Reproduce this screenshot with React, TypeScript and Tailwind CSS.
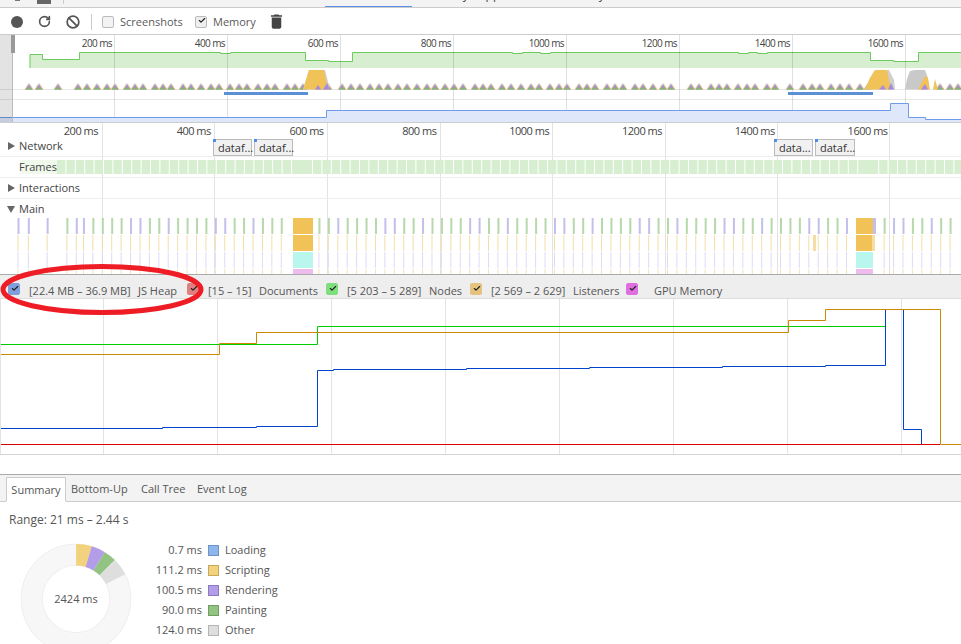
import React from 'react';
import { Check, RotateCw, Ban } from 'lucide-react';

const flameGrid = [102.5, 214.5, 327.5, 440.5, 552.5, 665.5, 777.5, 889.5];
const overviewGrid = [114.5, 227.5, 340.5, 453.5, 566.5, 679.5, 792.5, 905.5];
const memoryGrid = [103.5, 217.5, 331.5, 445.5, 559.5, 673.5, 787.5, 901.5];

const fpsPath = 'M30 68V54.5H42.5V59.5H79.5V52.5H220.5V53.5H230.5V52.5H305.5V60.5H328.5V61.5H352.5V52.5H512.5V53.5H522.5V52.5H540.5V53.5H550.5V52.5H738.5V53.5H748.5V52.5H757.5V53.5H767.5V52.5H870.5V60.5H893.5V61.5H918.5V52.5H961';

const bumps = [29, 39, 58, 78, 87, 97, 107, 115, 127, 135, 143, 155, 163, 171, 183, 191, 201, 211, 219, 230, 239, 247, 258, 267, 275, 287, 295, 303, 319, 328, 342, 351, 360, 370, 379, 388, 398, 407, 417, 427, 435, 445, 454, 463, 475, 483, 491, 502, 511, 521, 531, 539, 550, 559, 567, 579, 587, 595, 607, 615, 623, 635, 643, 653, 663, 671, 691, 699, 711, 719, 727, 738, 747, 755, 767, 775, 790, 803, 812, 820, 831, 840, 849, 860, 868, 940, 950, 958];

const ticks = (() => {
  const out: { x: number; kind: string }[] = [];
  const kinds = 'gggppggpg';
  [0, 1.1, 3.1, 5.2, 6.2].forEach((n, i) => out.push({ x: 17.5 + n * 9.4, kind: 'pppgp'[i] }));
  for (let n = 7; n < 100; n++) {
    const x = 17.5 + n * 9.42 - 0.5;
    if ((x > 290 && x < 316) || (x > 852 && x < 877)) continue;
    out.push({ x, kind: kinds[n % kinds.length] });
  }
  return out;
})();

const frames = (() => {
  const out: { x: number; w: number }[] = [];
  let x = 57;
  while (x < 961) {
    const wide = (x > 285 && x < 300) || (x > 850 && x < 862);
    const w = wide ? 20 : 8.4;
    out.push({ x, w });
    x += w + 1;
  }
  return out;
})();

const pie = [
  { label: 'Loading', value: '0.7 ms', ms: 0.7, fill: '#8cb4e8', swatch: 'bg-[#8fb6ea] border-[#6d94c8]' },
  { label: 'Scripting', value: '111.2 ms', ms: 111.2, fill: '#f3d27e', swatch: 'bg-[#f3d27e] border-[#c9a85c]' },
  { label: 'Rendering', value: '100.5 ms', ms: 100.5, fill: '#b39de8', swatch: 'bg-[#b39de8] border-[#8d78c4]' },
  { label: 'Painting', value: '90.0 ms', ms: 90, fill: '#93c383', swatch: 'bg-[#93c383] border-[#6f9f60]' },
  { label: 'Other', value: '124.0 ms', ms: 124, fill: '#dedede', swatch: 'bg-[#dedede] border-[#b5b5b5]' },
];

const slice = (from: number, to: number) => {
  const pt = (r: number, a: number) => {
    const t = (a / 2424) * Math.PI * 2;
    return `${(56 + r * Math.sin(t)).toFixed(2)} ${(56 - r * Math.cos(t)).toFixed(2)}`;
  };
  return `M${pt(55, from)}A55 55 0 0 1 ${pt(55, to)}L${pt(33.5, to)}A33.5 33.5 0 0 0 ${pt(33.5, from)}Z`;
};

const Box = ({ className, checked = true }: { className: string; checked?: boolean }) => (
  <span className={`w-3 h-3 shrink-0 rounded-[2px] border flex items-center justify-center ${className}`}>
    {checked && <Check size={11} strokeWidth={3.5} className="text-[#222] -mt-0.5 ml-0.5" />}
  </span>
);

const Chip = ({ label, className }: { label: string; className: string }) => (
  <span className={`absolute top-px h-[17px] bg-[#f1f1f1] border border-[#bbb] text-[#333] pl-1 leading-[16px] ${className}`}>
    <span className="absolute -left-px -top-px w-[3px] h-[3px] bg-[#4a8fe8]" />
    {label}
  </span>
);

export default function App() {
  return (
    <div className="relative w-[961px] h-[644px] overflow-hidden bg-white text-[11px] text-[#444] flex flex-col font-['Open_Sans',sans-serif]">
      {/* tab strip, cut off by the crop */}
      <div className="relative h-[8px] shrink-0 bg-[#f3f3f3] border-b border-[#ccc] overflow-hidden">
        <span className="absolute left-[15px] top-0 w-[5px] h-[1px] bg-[#777]" />
        <span className="absolute left-[37px] top-0 w-[14px] h-[4px] bg-[#666]" />
        <span className="absolute left-[63px] top-0 w-px h-[4px] bg-[#ccc]" />
        <span className="absolute left-[325px] bottom-0 w-[87px] h-[1.5px] bg-[#5b8fe8]" />
        <span className="absolute left-[422px] -top-[13px] text-xs leading-4">Memory</span>
        <span className="absolute left-[478px] -top-[13px] text-xs leading-4">Application</span>
        <span className="absolute left-[560px] -top-[13px] text-xs leading-4">Security</span>
      </div>

      {/* toolbar */}
      <div className="h-[27px] shrink-0 border-b border-[#ccc] flex items-center text-[#5a5a5a] pt-px">
        <span className="ml-[11px] w-3 h-3 rounded-full bg-[#555]" />
        <RotateCw size={13} strokeWidth={3} className="ml-[15px] text-[#555]" />
        <Ban size={14} strokeWidth={3} className="ml-[15px] text-[#555]" />
        <span className="ml-[11px] w-px h-4 bg-[#ccc]" />
        <Box className="ml-[10px] bg-[#f3f3f3] border-[#bbb]" checked={false} />
        <span className="ml-[6px] w-[75px] pt-[2px]">Screenshots</span>
        <Box className="bg-[#eee] border-[#bbb]" />
        <span className="ml-[6px] w-[54px] pt-[2px]">Memory</span>
        <svg width="19" height="19" viewBox="0 0 24 24">
          <path fill="#444" d="M6 19c0 1.1.9 2 2 2h8c1.1 0 2-.9 2-2V7H6v12zM19 4h-3.5l-1-1h-5l-1 1H5v2h14V4z" />
        </svg>
      </div>

      {/* overview */}
      <div className="relative h-[88px] shrink-0 border-b border-[#ccc]">
        <svg width="961" height="87" viewBox="0 35 961 87" className="block">
          <path d={`${fpsPath}V68H30Z`} fill="#d7efd0" />
          <path d={fpsPath} fill="none" stroke="#6bcb5c" strokeWidth="1" />
          <path d="M0 89.5H961M0 99.5H961" stroke="#e8e8e8" fill="none" />
          {overviewGrid.map(x => <line key={x} x1={x} x2={x} y1={35} y2={122} stroke="#0000001f" />)}
          {bumps.map(c => (
            <g key={c}>
              <path d={`M${c - 4.5} 89.5L${c - 0.8} 83.5H${c + 0.8}L${c + 4.5} 89.5Z`} fill="#d4d0c4" />
              <path d={`M${c - 4.5} 89.5L${c - 1.5} 85.5H${c + 1.5}L${c + 4.5} 89.5Z`} fill="#eecb78" />
              <path d={`M${c - 3.5} 89.5L${c} 84.5L${c + 3.5} 89.5Z`} fill="#a58ae0" />
              <path d={`M${c - 3.5} 89.5L${c - 1.5} 87.5H${c + 1.5}L${c + 3.5} 89.5Z`} fill="#7fb86e" />
            </g>
          ))}
          <path d="M303 89.5L305 83L309 70H325L330 89.5Z" fill="#cfcfcf" />
          <path d="M303 89.5L305 83L309 70H324L327 84L329 89.5Z" fill="#f0c258" />
          <path d="M315 89.5L318 85L321 89.5ZM323 89.5L327 83L330 89.5Z" fill="#a58ae0" />
          <path d="M865 89.5L870 78L875 70H889L894 80L895 89.5Z" fill="#cfcfcf" />
          <path d="M865 89.5L870 78L875 70H887L890 84L892 89.5Z" fill="#f0c258" />
          <path d="M879 89.5L883 85L886 89.5ZM888 89.5L891 83L894 89.5Z" fill="#a58ae0" />
          <path d="M905 89.5L907 79L910 71L915 70H925L928 78L925 89.5Z" fill="#c9c9c9" />
          <path d="M918 89.5L925 76L928 78L930 89.5ZM933 89.5L935 79L938 89.5Z" fill="#f0c258" />
          <path d="M921 89.5L925 84L928 89.5Z" fill="#a58ae0" />
          <rect x="224" y="92" width="84" height="3" fill="#5b8fd6" />
          <rect x="788" y="92" width="85" height="3" fill="#5b8fd6" />
          <path d="M0 122V117.5H326.5V110.5H890.5V103.5H908.5V117.5H925.5V119.5H961V122Z" fill="#dfe7fa" />
          <path d="M0 117.5H326.5V110.5H890.5V103.5H908.5V117.5H925.5V119.5H961" fill="none" stroke="#6f9be8" />
          <rect x="0" y="35" width="12" height="87" fill="#0000001c" />
          <line x1="12.5" x2="12.5" y1="35" y2="122" stroke="#bbb" />
          <rect x="11" y="35" width="4" height="18" fill="#999" />
        </svg>
        <div className="absolute left-0 top-px flex whitespace-nowrap text-[10px] tracking-[-0.6px] text-[#444] ml-[1px]">
          {[200, 400, 600, 800, 1000, 1200, 1400, 1600].map(t => (
            <span key={t} className="w-[113px] shrink-0 text-right pr-[2px]">{t} ms</span>
          ))}
        </div>
      </div>

      {/* flame chart rows */}
      <div className="relative h-[151px] shrink-0 flex flex-col">
        <svg width="961" height="151" className="absolute inset-0">
          {flameGrid.map(x => <line key={x} x1={x} x2={x} y1={0} y2={151} stroke="#0000001c" />)}
        </svg>
        <div className="relative h-[15px] shrink-0 flex whitespace-nowrap tracking-[-0.5px] -ml-[10.8px]">
          {[200, 400, 600, 800, 1000, 1200, 1400, 1600, 1800].map(t => (
            <span key={t} className="w-[112.8px] shrink-0 text-right pr-[4px]">{t} ms</span>
          ))}
        </div>
        <div className="relative h-[19px] shrink-0 border-b border-[#eee] flex items-center pl-[8px]">
          <span className="w-0 h-0 mb-[2px] border-y-[4px] border-y-transparent border-l-[7px] border-l-[#666]" />
          <span className="ml-[4px] pb-[2px]">Network</span>
          <Chip label="dataf..." className="left-[213px] w-[39px]" />
          <Chip label="dataf..." className="left-[254px] w-[39px]" />
          <Chip label="data..." className="left-[774px] w-[39px]" />
          <Chip label="dataf..." className="left-[815px] w-[40px]" />
        </div>
        <div className="relative h-[21px] shrink-0 border-b border-[#eee] flex items-center">
          <svg width="961" height="14" viewBox="0 160 961 14" className="absolute left-0 top-[3px]">
            {frames.map(f => <rect key={f.x} x={f.x} y={160} width={f.w} height={14} fill="#d7efd0" />)}
            <rect x="20" y="160" width="37" height="14" fill="#f0f9ec" />
          </svg>
          <span className="relative ml-[19px]">Frames</span>
        </div>
        <div className="relative h-[21px] shrink-0 border-b border-[#eee] flex items-center pl-[8px]">
          <span className="w-0 h-0 border-y-[4px] border-y-transparent border-l-[7px] border-l-[#666]" />
          <span className="ml-[4px]">Interactions</span>
        </div>
        <div className="relative h-[75px] shrink-0 flex flex-col">
          <div className="h-[19px] shrink-0 flex items-center pl-[7px] pt-[2px]">
            <span className="w-0 h-0 border-x-[4px] border-x-transparent border-t-[7px] border-t-[#666]" />
            <span className="ml-[4px]">Main</span>
          </div>
          <svg width="961" height="56" viewBox="0 218 961 56" className="block">
            {ticks.map(t => (
              <g key={t.x}>
                <rect x={t.x} y={218} width={2} height={16} fill={t.kind === 'g' ? '#b6d8aa' : '#c3bfea'} />
                <rect x={t.x} y={235} width={1} height={16} fill="#f5dea6" />
                <rect x={t.x} y={252} width={1} height={16} fill="#dedbf5" />
                <rect x={t.x} y={269} width={1} height={5} fill="#f5e3b8" />
              </g>
            ))}
            <rect x="293" y="218" width="20" height="16" fill="#f0c258" />
            <rect x="293" y="235" width="20" height="16" fill="#f0c258" />
            <rect x="293" y="252" width="20" height="16" fill="#b8f6ee" />
            <rect x="293" y="269" width="20" height="5" fill="#eebdee" />
            <rect x="856" y="218" width="17" height="16" fill="#f0c258" />
            <rect x="856" y="235" width="16" height="16" fill="#f0c258" />
            <rect x="872" y="235" width="3" height="16" fill="#f5dea6" />
            <rect x="856" y="252" width="17" height="16" fill="#b8f6ee" />
            <rect x="856" y="269" width="17" height="5" fill="#eebdee" />
            <rect x="873" y="218" width="3" height="16" fill="#c3bfea" />
            <rect x="813" y="235" width="3" height="16" fill="#f5dea6" />
          </svg>
        </div>
      </div>

      {/* counters */}
      <div className="h-[25px] shrink-0 bg-[#eee] border-y border-[#aaa] border-b-[#ddd] flex items-center pl-[8px] pt-[5px] whitespace-nowrap text-[#555]">
        <Box className="bg-[#7f9fdc] border-[#7f9fdc]" />
        <span className="ml-[9px] w-[109px] pt-1">[22.4 MB – 36.9 MB]</span>
        <span className="w-[49px] pt-1">JS Heap</span>
        <Box className="bg-[#e07f7f] border-[#e07f7f]" />
        <span className="ml-[9px] w-[51px] pt-1">[15 – 15]</span>
        <span className="w-[67px] pt-1">Documents</span>
        <Box className="bg-[#7fdf7f] border-[#7fdf7f]" />
        <span className="ml-[9px] w-[82px] pt-1">[5 203 – 5 289]</span>
        <span className="w-[41px] pt-1">Nodes</span>
        <Box className="bg-[#e5c37f] border-[#e5c37f]" />
        <span className="ml-[9px] w-[82px] pt-1">[2 569 – 2 629]</span>
        <span className="w-[53px] pt-1">Listeners</span>
        <Box className="bg-[#df6fdf] border-[#df6fdf]" />
        <span className="ml-[16px] pt-1">GPU Memory</span>
      </div>

      {/* memory graph */}
      <div className="h-[156px] shrink-0 border-b border-[#d4d4d4]">
        <svg width="961" height="155" viewBox="0 299 961 155" className="block">
          {memoryGrid.map(x => <line key={x} x1={x} x2={x} y1={299} y2={454} stroke="#e4e4e4" />)}
          <line x1="0.5" x2="0.5" y1="299" y2="454" stroke="#e4e4e4" />
          <path d="M1 444.5H940" fill="none" stroke="#dd0000" />
          <path d="M1 344.5H317.5V326.5H885.5V309.5" fill="none" stroke="#00cc00" />
          <path d="M1 428.5H162.5V427.5H256.5V426.5H317.5V370.5H333.5V369.5H466.5V368.5H589.5V367.5H722.5V366.5H825.5V365.5H885.5V309.5H903.5V429.5H921.5V444" fill="none" stroke="#0044cc" />
          <path d="M1 354.5H219.5V343.5H256.5V332.5H788.5V320.5H825.5V309.5H940.5V444.5H961" fill="none" stroke="#cc8800" />
        </svg>
      </div>

      <div className="h-[19px] shrink-0" />

      {/* details tabs */}
      <div className="h-[28px] shrink-0 bg-[#f3f3f3] border-y border-[#aaa] border-b-[#ccc] flex items-end pl-[6px] text-[#555]">
        <span className="w-[60px] h-[25px] -mb-px pt-px bg-white border border-[#ccc] border-b-white flex items-center justify-center">Summary</span>
        <span className="ml-[5px] w-[70px] h-6 pt-px flex items-center">Bottom-Up</span>
        <span className="w-[56px] h-6 pt-px flex items-center">Call Tree</span>
        <span className="h-6 pt-px flex items-center">Event Log</span>
      </div>

      {/* summary */}
      <div className="pl-[9px] pt-[10px] text-[#555]">
        <div className="leading-4 text-[12px]">Range: 21 ms – 2.44 s</div>
        <div className="flex mt-[15px]">
          <div className="relative ml-[11px] w-[112px] h-[112px] shrink-0">
            <svg width="112" height="112" className="block">
              <circle cx="56" cy="56" r="44.2" fill="none" stroke="#ececec" strokeWidth="22" />
              <circle cx="56" cy="56" r="44.2" fill="none" stroke="#f7f7f7" strokeWidth="20.5" />
              {pie.reduce<{ from: number; els: React.ReactNode[] }>((acc, p) => {
                acc.els.push(<path key={p.label} d={slice(acc.from, acc.from + p.ms)} fill={p.fill} />);
                acc.from += p.ms;
                return acc;
              }, { from: 0, els: [] }).els}
            </svg>
            <div className="absolute inset-0 flex items-center justify-center">2424 ms</div>
          </div>
          <div className="ml-[14px] -mt-[3px] flex flex-col">
            {pie.map(p => (
              <div key={p.label} className="h-5 flex items-center">
                <span className="w-[56px] text-right">{p.value}</span>
                <span className={`ml-[6px] w-[11px] h-[11px] border ${p.swatch}`} />
                <span className="ml-[6px]">{p.label}</span>
              </div>
            ))}
          </div>
        </div>
      </div>

      {/* hand-drawn annotation */}
      <svg width="210" height="56" viewBox="0 262 210 56" className="absolute left-0 top-[262px] pointer-events-none">
        <ellipse cx="102" cy="289.5" rx="99" ry="23" fill="none" stroke="#ee1c25" strokeWidth="5" />
      </svg>
    </div>
  );
}
